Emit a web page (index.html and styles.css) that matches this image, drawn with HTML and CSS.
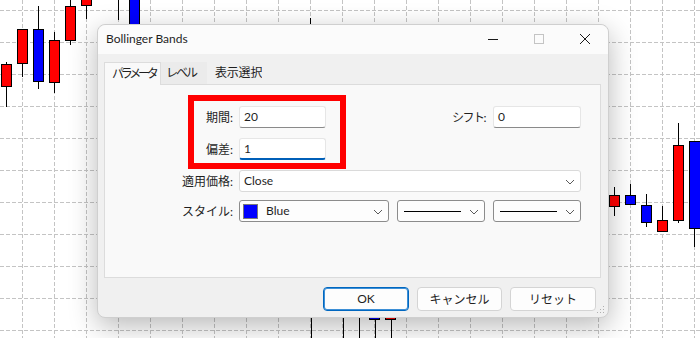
FILE: index.html
```html
<!DOCTYPE html>
<html lang="ja">
<head>
    <meta charset="utf-8">
    <title>Bollinger Bands</title>
    <link rel="stylesheet" href="styles.css">
</head>
<body>
    <!-- チャート背景 -->
    <svg class="chart" width="700" height="338" viewBox="0 0 700 338">
        <path class="grid" d="M22.5 0V338M54.5 0V338M86.5 0V338M118.5 0V338M150.5 0V338M182.5 0V338M214.5 0V338M246.5 0V338M278.5 0V338M310.5 0V338M342.5 0V338M374.5 0V338M406.5 0V338M438.5 0V338M470.5 0V338M502.5 0V338M534.5 0V338M566.5 0V338M598.5 0V338M630.5 0V338M662.5 0V338M694.5 0V338"/>
        <path class="grid" d="M0 10.5H700M0 42.5H700M0 74.5H700M0 106.5H700M0 138.5H700M0 170.5H700M0 202.5H700M0 234.5H700M0 266.5H700M0 298.5H700M0 330.5H700"/>
        <path class="wick" d="M6.5 62V107M22.5 64V77M38.5 6V89M54.5 32V93M70.5 0V45M86.5 0V19M118.5 0V20M310.5 18V26M614.5 187V216M630.5 184V196M646.5 194V227M662.5 206V232M678.5 123V223M694.5 141V247M311.5 318V338M343.5 318V338M359.5 318V338M375.5 318V338M391.5 318V338"/>
        <rect class="up" x="1.5" y="64.5" width="10" height="22"/>
        <rect class="up" x="17.5" y="29.5" width="10" height="34"/>
        <rect class="down" x="33.5" y="29.5" width="10" height="52"/>
        <rect class="up" x="49.5" y="40.5" width="10" height="42"/>
        <rect class="up" x="65.5" y="6.5" width="10" height="34"/>
        <rect class="up" x="81.5" y="-2.5" width="10" height="8"/>
        <rect class="down" x="129.5" y="-2.5" width="10" height="30"/>
        <rect class="up" x="609.5" y="195.5" width="10" height="11"/>
        <rect class="down" x="625.5" y="195.5" width="10" height="9"/>
        <rect class="down" x="641.5" y="205.5" width="10" height="17"/>
        <rect class="up" x="657.5" y="220.5" width="10" height="11"/>
        <rect class="up" x="673.5" y="145.5" width="10" height="75"/>
        <rect class="down" x="689.5" y="141.5" width="11" height="87"/>
        <rect class="down" x="369.5" y="316.5" width="10" height="3"/>
        <rect class="up" x="385.5" y="316.5" width="10" height="3"/>
    </svg>

    <div class="dialog">
        <div class="titlebar">
            <span class="title">Bollinger Bands</span>
            <div class="caption">
                <span class="cap-btn"><svg width="12" height="12" viewBox="0 0 12 12"><path d="M1 6.5H11" stroke="#1a1a1a"/></svg></span>
                <span class="cap-btn"><svg width="12" height="12" viewBox="0 0 12 12"><rect x="1.5" y="1.5" width="9" height="9" fill="none" stroke="#c4c4c4"/></svg></span>
                <span class="cap-btn"><svg width="12" height="12" viewBox="0 0 12 12"><path d="M1 1L11 11M11 1L1 11" stroke="#1a1a1a"/></svg></span>
            </div>
        </div>

        <div class="tabs">
            <span class="tab active">パラメータ</span>
            <span class="tab hover">レベル</span>
            <span class="tab">表示選択</span>
        </div>

        <div class="panel">
            <div class="row">
                <label class="lbl">期間:</label>
                <span class="edit">20</span>
                <label class="lbl-right">シフト:</label>
                <span class="edit edit-short">0</span>
            </div>
            <div class="row">
                <label class="lbl">偏差:</label>
                <span class="edit focused">1</span>
            </div>
            <div class="row row-tight">
                <label class="lbl">適用価格:</label>
                <span class="combo combo-wide">Close
                    <svg class="chev" width="10" height="6" viewBox="0 0 10 6"><path d="M1 1L5 5L9 1" fill="none" stroke="#5a5a5a"/></svg>
                </span>
            </div>
            <div class="row">
                <label class="lbl">スタイル:</label>
                <span class="combo combo-dark combo-color"><i class="swatch"></i>Blue
                    <svg class="chev" width="10" height="6" viewBox="0 0 10 6"><path d="M1 1L5 5L9 1" fill="none" stroke="#5a5a5a"/></svg>
                </span>
                <span class="combo combo-dark combo-line"><i class="line"></i>
                    <svg class="chev" width="10" height="6" viewBox="0 0 10 6"><path d="M1 1L5 5L9 1" fill="none" stroke="#5a5a5a"/></svg>
                </span>
                <span class="combo combo-dark combo-line"><i class="line"></i>
                    <svg class="chev" width="10" height="6" viewBox="0 0 10 6"><path d="M1 1L5 5L9 1" fill="none" stroke="#5a5a5a"/></svg>
                </span>
            </div>

            <!-- 注目枠 -->
            <div class="highlight"></div>
        </div>

        <div class="buttons">
            <button class="btn default">OK</button>
            <button class="btn btn-cancel">キャンセル</button>
            <button class="btn">リセット</button>
        </div>

        <svg class="grip" width="10" height="10" viewBox="0 0 10 10">
            <rect x="7" y="1" width="1" height="1" fill="#b0b0b0"/>
            <rect x="4" y="4" width="1" height="1" fill="#b0b0b0"/>
            <rect x="7" y="4" width="1" height="1" fill="#b0b0b0"/>
            <rect x="1" y="7" width="1" height="1" fill="#b0b0b0"/>
            <rect x="4" y="7" width="1" height="1" fill="#b0b0b0"/>
            <rect x="7" y="7" width="1" height="1" fill="#b0b0b0"/>
        </svg>
    </div>
</body>
</html>
```

FILE: styles.css
```css
body {
    margin: 0;
    width: 700px;
    height: 338px;
    overflow: hidden;
    position: relative;
    background-color: #ffffff;
    font-family: Lato, "Noto Sans CJK JP", sans-serif;
    font-size: 12px;
    color: #1f1f1f;
}
.chart {
    position: absolute;
    left: 0;
    top: 0;
}
.grid {
    stroke: #c4c4c4;
    stroke-width: 1;
    stroke-dasharray: 4 2;
    fill: none;
}
.wick {
    stroke: #000000;
    stroke-width: 1;
    fill: none;
}
.up {
    fill: #ff0000;
    stroke: #000000;
}
.down {
    fill: #0000ff;
    stroke: #000000;
}
.dialog {
    position: absolute;
    left: 97px;
    top: 24px;
    width: 512px;
    height: 294px;
    box-sizing: border-box;
    border: 1px solid #cfcfcf;
    border-radius: 8px;
    background-color: #f0f0f0;
    box-shadow: 0 8px 28px rgba(0, 0, 0, 0.28);
    display: flex;
    flex-direction: column;
}
.titlebar {
    height: 29px;
    display: flex;
    align-items: center;
    background-color: #fbfbfb;
    border-radius: 8px 8px 0 0;
}
.title {
    padding-left: 8px;
    padding-bottom: 2px;
}
.caption {
    margin-left: auto;
    display: flex;
    height: 100%;
}
.cap-btn {
    width: 46px;
    display: flex;
    align-items: center;
    justify-content: center;
    padding-bottom: 2px;
}
.tabs {
    display: flex;
    padding-left: 6px;
    margin-top: 8px;
    position: relative;
    z-index: 1;
}
.tab {
    height: 22px;
    line-height: 21px;
    box-sizing: border-box;
    white-space: nowrap;
    overflow: hidden;
}
.tab.active {
    width: 57px;
    height: 23px;
    padding-left: 7px;
    letter-spacing: -3.2px;
    background-color: #f9f9f9;
    border: 1px solid #dcdcdc;
    border-bottom: none;
    margin-bottom: -1px;
}
.tab.hover {
    width: 46px;
    padding-left: 5px;
    letter-spacing: -2px;
    background-color: #ebebeb;
}
.tab:last-child {
    padding-left: 8px;
    letter-spacing: -0.2px;
}
.panel {
    position: relative;
    margin: 0 7px 0 6px;
    height: 194px;
    box-sizing: border-box;
    border: 1px solid #dcdcdc;
    background-color: #f9f9f9;
    padding: 21px 19px 0 0;
}
.row {
    display: flex;
    align-items: center;
    height: 22px;
    margin-bottom: 10px;
}
.row-tight {
    margin-bottom: 8px;
}
.lbl {
    width: 128px;
    margin-right: 6px;
    text-align: right;
    padding-bottom: 1px;
}
.lbl-right {
    flex: 1;
    text-align: right;
    padding-right: 8px;
    padding-bottom: 1px;
    letter-spacing: -1.5px;
}
.edit {
    width: 87px;
    height: 22px;
    box-sizing: border-box;
    background-color: #ffffff;
    border: 1px solid #e6e6e6;
    border-bottom-color: #8a8a8a;
    border-radius: 3px;
    padding-left: 4px;
    line-height: 20px;
}
.edit-short {
    width: 88px;
}
.edit.focused {
    border-bottom: 2px solid #005fb8;
    line-height: 19px;
}
.combo {
    position: relative;
    height: 22px;
    box-sizing: border-box;
    background-color: #ffffff;
    border: 1px solid #dadada;
    border-radius: 3px;
    padding-left: 4px;
    line-height: 20px;
    display: flex;
    align-items: center;
}
.combo-wide {
    flex: 1;
}
.combo-dark {
    border-color: #8c8c8c;
    background-color: #fdfdfd;
}
.combo-color {
    width: 150px;
    margin-right: 8px;
    padding-left: 3px;
}
.combo-line {
    width: 88px;
    margin-right: 8px;
    padding-left: 6px;
}
.combo-line:last-child {
    margin-right: 0;
}
.chev {
    position: absolute;
    right: 5px;
    top: 8px;
}
.swatch {
    width: 13px;
    height: 13px;
    background-color: #0000ff;
    border: 1px solid #7a7a7a;
    margin-right: 8px;
}
.line {
    width: 57px;
    height: 1px;
    background-color: #000000;
}
.highlight {
    position: absolute;
    left: 83px;
    top: 10px;
    width: 158px;
    height: 74px;
    box-sizing: border-box;
    border: 6px solid #ff0000;
}
.buttons {
    display: flex;
    justify-content: flex-end;
    gap: 8px;
    margin-top: 9px;
    padding-right: 12px;
}
.btn {
    width: 86px;
    height: 24px;
    box-sizing: border-box;
    background-color: #fdfdfd;
    border: 1px solid #d4d4d4;
    border-radius: 4px;
    font-family: Lato, "Noto Sans CJK JP", sans-serif;
    font-size: 12px;
    color: #1f1f1f;
    padding: 0 0 1px;
}
.btn-cancel {
    width: 85px;
}
.btn.default {
    border: 1px solid #0067c0;
    box-shadow: inset 0 0 0 1px #3d8fd6;
}
.grip {
    position: absolute;
    right: 2px;
    bottom: 2px;
}
```
